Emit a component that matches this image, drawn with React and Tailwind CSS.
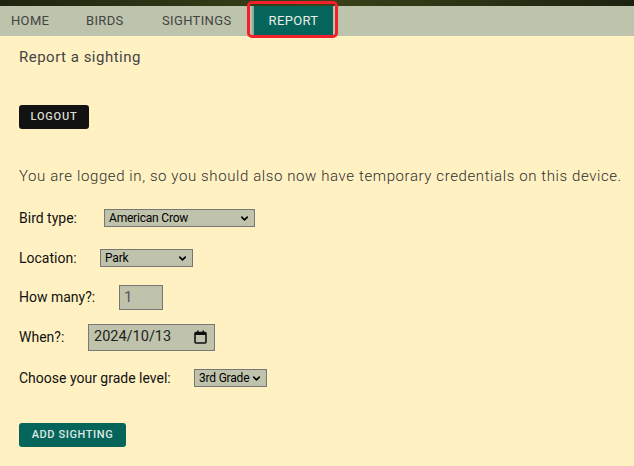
import { ChevronDown } from 'lucide-react';

const font = { fontFamily: 'Roboto, "Liberation Sans", sans-serif' };

function Select({ value, width, options }) {
  return (
    <div className={`relative h-[18px] ${width} border border-[#777] bg-[#bfc3ab]`}>
      <select
        defaultValue={value}
        className="block h-[16px] w-full appearance-none bg-transparent py-0 pl-[4px] text-[12px] leading-none tracking-[-0.2px] text-black outline-none"
      >
        {options.map((o) => (
          <option key={o}>{o}</option>
        ))}
      </select>
      <ChevronDown size={11} strokeWidth={3.5} className="pointer-events-none absolute right-[4px] top-[3px] text-black" />
    </div>
  );
}

export default function App() {
  return (
    <div className="min-h-[466px] w-[634px] bg-[#fff1c2] text-[#444]" style={font}>
      {/* top photo strip */}
      <div className="h-[6px] w-full bg-gradient-to-r from-[#1e2410] via-[#3a4218] to-[#1c2210]" />

      {/* nav */}
      <nav className="relative flex h-[30px] items-stretch bg-[#bec3ab] text-[13px] tracking-[0.35px] text-[#444]">
        <a className="flex w-[75px] items-center pl-[11px]">HOME</a>
        <a className="flex w-[76px] items-center pl-[11px]">BIRDS</a>
        <a className="flex w-[101px] items-center pl-[11px]">SIGHTINGS</a>
        <a className="flex w-[81px] items-center justify-center border-l-2 border-[#8fa89c] bg-[#06655a] text-[#e8efe9]">REPORT</a>
        <div className="pointer-events-none absolute left-[247px] top-[-5px] h-[37px] w-[91px] rounded-[5px] border-[3px] border-[#f2202a]" />
      </nav>

      <main className="pl-[19px]">
        <h1 className="mt-[11px] text-[15px] font-normal leading-[20px] tracking-[0.5px]">Report a sighting</h1>

        <button className="mt-[38px] flex h-[24px] w-[70px] items-center justify-center rounded-[3px] bg-[#121212] text-[11px] font-medium tracking-[0.8px] text-[#dcdcd0]">
          LOGOUT
        </button>

        <p className="mt-[35px] whitespace-nowrap text-[15px] font-light leading-[24px] tracking-[0.6px] text-[#2e2e2e]">
          You are logged in, so you should also now have temporary credentials on this device.
        </p>

        <div className="mt-[17px] flex h-[26px] items-center text-[14px] text-[#111]">
          <span className="w-[85px]">Bird type:</span>
          <Select value="American Crow" width="w-[151px]" options={['American Crow', 'Blue Jay', 'Robin']} />
        </div>

        <div className="mt-[14px] flex h-[26px] items-center text-[14px] text-[#111]">
          <span className="w-[81px]">Location:</span>
          <Select value="Park" width="w-[93px]" options={['Park', 'Backyard', 'School']} />
        </div>

        <div className="mt-[13px] flex h-[26px] items-center text-[14px] text-[#111]">
          <span className="w-[100px]">How many?:</span>
          <input
            type="text"
            defaultValue="1"
            className="h-[25px] w-[44px] border border-[#777] bg-[#bfc3ab] pl-[4px] text-[15px] text-[#555] outline-none"
          />
        </div>

        <div className="mt-[14px] flex h-[26px] items-center text-[14px] text-[#111]">
          <span className="w-[69px]">When?:</span>
          <div className="flex h-[27px] w-[127px] items-center justify-between border border-[#777] bg-[#bfc3ab] pl-[5px] pr-[7px] text-[14.5px] text-[#222]">
            <span>2024/10/13</span>
            <svg width="13" height="14" viewBox="0 0 13 14" fill="none">
              <rect x="1" y="2.5" width="11" height="10.5" rx="1" stroke="#111" strokeWidth="1.6" />
              <rect x="1" y="2.5" width="11" height="2.5" fill="#111" />
              <rect x="3" y="0.5" width="1.6" height="3" fill="#111" />
              <rect x="8.4" y="0.5" width="1.6" height="3" fill="#111" />
            </svg>
          </div>
        </div>

        <div className="mt-[15px] flex h-[26px] items-center text-[14px] text-[#111]">
          <span className="w-[175px]">Choose your grade level:</span>
          <Select value="3rd Grade" width="w-[73px]" options={['1st Grade', '2nd Grade', '3rd Grade']} />
        </div>

        <button className="mt-[32px] flex h-[24px] w-[107px] items-center justify-center rounded-[3px] bg-[#06655a] text-[11px] font-medium tracking-[0.6px] text-[#dfe8e2]">
          ADD SIGHTING
        </button>
      </main>
    </div>
  );
}
